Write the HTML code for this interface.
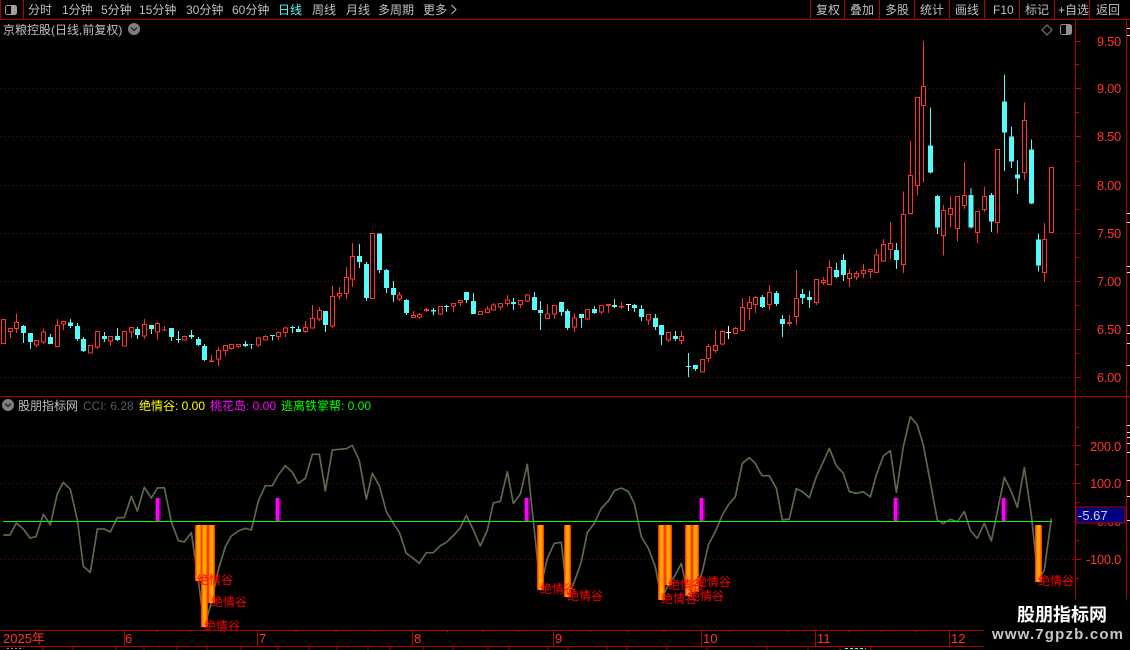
<!DOCTYPE html>
<html lang="zh">
<head>
<meta charset="utf-8">
<title>股朋指标网</title>
<style>
html,body{margin:0;padding:0;background:#000;width:1130px;height:650px;overflow:hidden}
svg{display:block}
text{font-family:"Liberation Sans","WenQuanYi Zen Hei","Noto Sans CJK SC",sans-serif;font-size:12px}
.c path{shape-rendering:crispEdges;fill:none}
.rw{stroke:#ff3232;stroke-width:3}
.rf{stroke:#ff3232;stroke-width:15}
.rb{stroke:#ff3232;stroke-width:3;fill:#000!important}
.cw{stroke:#54fcfc;stroke-width:3}
.cf{stroke:#54fcfc;stroke-width:15}
.ww{stroke:#fff;stroke-width:3}
.wf{stroke:#fff;stroke-width:15}
.cci{fill:none;stroke:#5f6a4c;stroke-width:5;stroke-linejoin:round}
.dim{shape-rendering:crispEdges}
.ax{fill:#ff3232;font-size:13px;text-anchor:end;letter-spacing:-.3px}
.tb{fill:#c0c0c0}
.jq{fill:#ff0000}
.tm{fill:#ff3232;font-size:13px}
</style>
</head>
<body>
<svg width="1130" height="650" viewBox="0 0 1130 650" xmlns="http://www.w3.org/2000/svg">
<defs>
<linearGradient id="o">
<stop offset="0" stop-color="#ff3c00"/><stop offset=".143" stop-color="#ff3c00"/>
<stop offset=".143" stop-color="#ff7800"/><stop offset=".286" stop-color="#ff7800"/>
<stop offset=".286" stop-color="#ffa000"/><stop offset=".714" stop-color="#ffa800"/>
<stop offset=".714" stop-color="#ff7800"/><stop offset=".857" stop-color="#ff7800"/>
<stop offset=".857" stop-color="#ff3c00"/><stop offset="1" stop-color="#ff3c00"/>
</linearGradient>
<linearGradient id="p">
<stop offset="0" stop-color="#600060"/><stop offset=".167" stop-color="#600060"/>
<stop offset=".167" stop-color="#ff00ff"/><stop offset=".667" stop-color="#ff00ff"/>
<stop offset=".667" stop-color="#900090"/><stop offset="1" stop-color="#600060"/>
</linearGradient>
</defs>
<rect width="1130" height="650" fill="#000"/>

<!-- grid -->
<g class="dim" stroke="#7a0000" stroke-dasharray="1 3" fill="none">
<path d="M0 88.5H1075M0 136.5H1075M0 185.5H1075M0 233.5H1075M0 281.5H1075M0 329.5H1075M0 377.5H1075M0 445.5H1075M0 483.5H1075M0 559.5H1075"/>
</g>

<!-- candles part 1 -->
<g class="c" transform="translate(.17,230) scale(.33333)">
<path class="rw" d="M31 294V324M49 250V309M109 331V351M130 295V342M172 267V351M190 271V300M292 304V357M331 318V348M394 292V324M433 267V327M472 276V330M493 288V303M553 316V332M634 375V396M655 351V408M676 345V378M694 342V358M715 342V354M775 321V351M796 316V332M835 304V330M856 291V321M916 273V309M937 225V294M958 231V273M997 168V294M1018 171V210M1039 111V207M1057 39V171"/>
<path class="rb" d="M4 268h12V341h-12zM25 295h12V304h-12zM43 277h12V296h-12zM103 331h12V345h-12zM124 306h12V336h-12zM166 286h12V350h-12zM184 274h12V282h-12zM265 346h12V369h-12zM286 304h12V351h-12zM325 319h12V333h-12zM367 304h12V348h-12zM388 292h12V306h-12zM427 283h12V318h-12zM466 280h12V306h-12zM547 319h12V330h-12zM649 361h12V387h-12zM670 346h12V362h-12zM688 343h12V356h-12zM709 343h12V350h-12zM769 324h12V345h-12zM790 319h12V330h-12zM829 307h12V320h-12zM850 294h12V308h-12zM910 292h12V305h-12zM931 265h12V294h-12zM952 241h12V267h-12zM991 199h12V288h-12zM1012 190h12V198h-12zM1033 142h12V191h-12zM1051 79h12V147h-12zM1111 10h12V206h-12z"/>
<path class="rf" d="M493 298V302M634 391V396"/>
<path class="cw" d="M70 285V339M91 309V357M151 312V342M211 267V294M232 279V333M250 321V366M313 306V336M352 294V333M412 291V327M454 285V312M514 294V333M535 303V339M574 300V327M595 321V348M613 342V393M736 333V351M754 342V357M817 315V331M877 288V309M895 288V306M976 243V306M1078 42V114M1099 96V213M1138 10V129"/>
<path class="cf" d="M70 288V309M91 309V336M151 321V342M211 277V288M232 288V327M250 327V363M313 318V327M352 318V330M412 297V315M454 285V297M514 294V321M535 327V330M574 315V321M595 327V345M613 348V390M736 342V348M754 343V345M817 315V318M877 291V294M895 297V306M976 243V285M1078 78V96M1099 102V204M1138 10V120"/>
</g>

<!-- candles part 2 -->
<g class="c" transform="translate(380.17,230) scale(.33333)">
<path class="rw" d="M58 186V213M100 243V264M118 249V267M139 234V246M181 228V255M220 219V246M241 210V228M322 228V249M340 219V241M361 219V240M382 195V228M421 210V234M442 192V216M502 222V267M523 225V267M583 249V306M622 237V270M664 225V252M685 222V249M724 216V237M805 252V285M865 306V336M904 303V342M985 342V396M1006 300V369M1027 300V345M1066 291V312M1087 204V303M1108 198V270M1126 198V249"/>
<path class="rb" d="M52 195h12V207h-12zM94 256h12V263h-12zM112 253h12V261h-12zM175 229h12V252h-12zM214 220h12V228h-12zM235 211h12V218h-12zM295 244h12V254h-12zM316 237h12V248h-12zM334 225h12V240h-12zM355 220h12V231h-12zM376 210h12V221h-12zM415 211h12V224h-12zM436 195h12V213h-12zM496 252h12V266h-12zM517 226h12V252h-12zM577 264h12V291h-12zM616 238h12V267h-12zM658 226h12V246h-12zM799 253h12V270h-12zM859 307h12V330h-12zM898 319h12V332h-12zM961 388h12V426h-12zM979 349h12V386h-12zM1000 346h12V362h-12zM1021 304h12V342h-12zM1060 295h12V311h-12zM1081 232h12V302h-12zM1102 217h12V236h-12zM1120 202h12V224h-12z"/>
<path class="rf" d="M139 237V243M685 222V228M724 228V233"/>
<path class="cw" d="M19 117V189M40 153V216M79 207V255M160 234V255M199 225V246M259 186V219M280 189V252M400 204V240M463 186V240M481 213V300M544 216V258M562 237V300M604 252V294M643 228V252M703 207V234M763 222V246M784 225V273M826 252V300M844 285V345M886 303V333M925 369V441M946 405V423"/>
<path class="cf" d="M19 120V174M40 174V195M79 210V249M160 240V245M199 228V231M259 186V210M280 213V252M400 216V222M463 201V240M481 240V249M544 216V246M562 243V294M604 252V264M643 237V249M703 225V231M763 225V234M784 237V261M826 264V291M844 285V315M886 318V327M925 408V411M946 405V417"/>
<path class="ww" d="M745 222V243M1045 288V327"/>
<path class="wf" d="M745 222V225M1045 306V309"/>
</g>

<!-- candles part 3 -->
<g class="c" transform="translate(760.17,200) scale(.33333)">
<path class="rw" d="M28 255V330M88 345V378M109 210V375M169 238V315M190 231V255M208 180V255M268 207V261M289 213V240M310 192V234M331 207V234M349 147V219M370 117V186M391 66V177"/>
<path class="rb" d="M22 277h12V314h-12zM103 295h12V349h-12zM163 239h12V307h-12zM184 241h12V247h-12zM202 202h12V254h-12zM262 220h12V236h-12zM283 220h12V231h-12zM304 211h12V220h-12zM325 208h12V215h-12zM343 165h12V218h-12zM364 133h12V183h-12zM385 130h12V149h-12z"/>
<path class="rf" d="M88 366V372"/>
<path class="cw" d="M7 285V324M49 273V318M67 345V411M127 267V312M148 273V324M229 189V234M250 162V243M409 129V207"/>
<path class="cf" d="M7 291V321M49 279V312M67 357V372M127 282V294M148 291V300M229 210V231M250 180V225M409 150V180"/>
</g>

<!-- candles part 4 -->
<g class="c" transform="translate(760.17,30) scale(.33333)">
<path class="rw" d="M430 484V729M451 333V553M472 466V497M490 33V458M550 525V677M571 498V591M592 595V635M613 397V537M652 607V639M673 471V546M712 577V610M793 217V450M853 579V755"/>
<path class="rb" d="M424 553h12V703h-12zM445 436h12V550h-12zM466 202h12V466h-12zM484 170h12V227h-12zM544 541h12V616h-12zM565 535h12V554h-12zM586 499h12V595h-12zM607 496h12V526h-12zM646 544h12V607h-12zM667 499h12V538h-12zM706 358h12V577h-12zM787 271h12V427h-12zM847 628h12V728h-12zM868 412h12V608h-12z"/>
<path class="cw" d="M511 232V430M532 495V612M632 474V596M694 489V606M733 133V423M754 289V414M772 391V492M814 328V522M835 610V725"/>
<path class="cf" d="M511 346V428M532 498V593M632 495V593M694 495V575M733 214V308M754 319V395M772 433V446M814 358V521M835 628V707"/>
</g>

<!-- CCI line -->
<g transform="translate(0,395) scale(.33333)"><polyline class="cci" points="10,420 30,420 49,384 70,402 90,429 108,425 130,358 151,390 172,296 190,262 211,283 232,375 250,514 271,532 292,402 313,402 331,411 352,368 373,368 394,304 412,348 433,277 454,309 472,279 493,278 514,380 535,437 553,441 574,413 595,557 613,695 634,623 655,525 676,455 694,423 715,408 736,400 754,405 775,318 796,272 817,272 835,240 856,212 877,232 895,265 916,250 937,178 958,178 976,288 997,165 1018,163 1039,161 1057,151 1078,197 1099,313 1117,235 1138,272"/></g>
<g transform="translate(380,395) scale(.33333)"><polyline class="cci" points="-2,272 19,350 40,385 58,412 79,475 100,490 118,505 139,473 160,473 181,452 199,442 220,422 241,398 259,361 280,405 301,453 322,405 340,324 361,319 382,230 400,325 421,297 442,208 463,405 481,583 502,490 523,445 544,442 562,605 583,560 604,500 622,412 643,385 664,340 685,318 703,287 724,279 745,290 763,325 784,425 805,460 826,515 844,613 865,570 886,540 904,505 925,603 946,590 967,530 985,450 1006,410 1027,360 1045,330 1066,305 1087,205 1108,188 1126,205 1140,232"/></g>
<g transform="translate(760,395) scale(.33333)"><polyline class="cci" points="0,232 7,242 28,242 49,280 67,375 88,372 109,281 127,290 148,308 169,245 190,200 208,160 229,212 250,235 268,290 289,295 310,290 331,306 349,240 370,183 391,167 409,292 430,155 451,65 472,90 490,150 511,262 532,375 550,386 571,373 592,380 613,350 632,408 652,430 673,385 694,438 712,350 733,247 754,290 772,337 793,218 814,360 835,558 853,525 874,370"/></g>

<!-- zero line -->
<rect class="dim" x="3" y="521" width="1049" height="1" fill="#00ff00"/>

<!-- orange bars -->
<g class="dim" fill="url(#o)">
<rect x="195" y="525" width="7" height="56"/>
<rect x="201" y="525" width="7" height="102"/>
<rect x="208" y="525" width="7" height="78"/>
<rect x="537" y="525" width="7" height="65"/>
<rect x="564" y="525" width="7" height="72"/>
<rect x="658" y="525" width="7" height="75"/>
<rect x="665" y="525" width="7" height="60"/>
<rect x="685" y="525" width="7" height="71"/>
<rect x="692" y="525" width="7" height="67"/>
<rect x="1035" y="525" width="7" height="57"/>
</g>
<!-- magenta bars -->
<g class="dim" fill="url(#p)">
<rect x="155" y="498" width="6" height="23"/>
<rect x="275" y="498" width="6" height="23"/>
<rect x="524" y="498" width="6" height="23"/>
<rect x="699" y="498" width="6" height="23"/>
<rect x="893" y="498" width="6" height="23"/>
<rect x="1001" y="498" width="6" height="23"/>
</g>

<!-- labels 绝情谷 -->
<text class="jq" x="197" y="584">绝情谷</text>
<text class="jq" x="211" y="606">绝情谷</text>
<text class="jq" x="204" y="630">绝情谷</text>
<text class="jq" x="540" y="593">绝情谷</text>
<text class="jq" x="567" y="600">绝情谷</text>
<text class="jq" x="661" y="603">绝情谷</text>
<text class="jq" x="668" y="589">绝情谷</text>
<text class="jq" x="688" y="600">绝情谷</text>
<text class="jq" x="695" y="586">绝情谷</text>
<text class="jq" x="1038" y="585">绝情谷</text>

<!-- frame -->
<g class="dim" fill="#b00000">
<rect x="0" y="19" width="1130" height="1"/>
<rect x="0" y="0" width="1" height="19"/>
<rect x="23" y="0" width="1" height="19"/>
<rect x="810" y="0" width="1" height="19"/>
<rect x="844" y="0" width="1" height="19"/>
<rect x="879" y="0" width="1" height="19"/>
<rect x="914" y="0" width="1" height="19"/>
<rect x="949" y="0" width="1" height="19"/>
<rect x="984" y="0" width="1" height="19"/>
<rect x="1019" y="0" width="1" height="19"/>
<rect x="1054" y="0" width="1" height="19"/>
<rect x="1089" y="0" width="1" height="19"/>
<rect x="0" y="396" width="1130" height="1"/>
<rect x="1075" y="20" width="1" height="580"/>
<rect x="1126" y="20" width="1" height="580"/>
<rect x="0" y="630" width="984" height="1"/>
<rect x="0" y="646" width="984" height="1"/>
<rect x="124" y="630" width="1" height="16"/>
<rect x="257" y="630" width="1" height="16"/>
<rect x="412" y="630" width="1" height="16"/>
<rect x="553" y="630" width="1" height="16"/>
<rect x="701" y="630" width="1" height="16"/>
<rect x="815" y="630" width="1" height="16"/>
<rect x="949" y="630" width="1" height="16"/>
</g>
<!-- axis ticks -->
<path class="dim" fill="none" stroke="#d00000" d="M1076 41.5h5M1076 88.5h5M1076 136.5h5M1076 185.5h5M1076 233.5h5M1076 281.5h5M1076 329.5h5M1076 377.5h5M1076 64.5h3M1076 112.5h3M1076 161.5h3M1076 209.5h3M1076 257.5h3M1076 305.5h3M1076 353.5h3M1076 445.5h5M1076 483.5h5M1076 559.5h5M1076 427.5h3M1076 464.5h3M1076 502.5h3M1076 540.5h3M1076 578.5h3M1073 445.5h1M1073 483.5h1M1073 559.5h1M1073 521.5h1"/>
<path class="dim" fill="none" stroke="#d00000" d="M157 630.5v2M190.5 630.5v2M224 630.5v2M296 630.5v2M336 630.5v2M374 630.5v2M447.5 630.5v2M483 630.5v2M518 630.5v2M590 630.5v2M627.5 630.5v2M664 630.5v2M730 630.5v2M787.5 630.5v2M849 630.5v2M882 630.5v2M916.5 630.5v2"/>
<path class="dim" fill="none" stroke="#b00000" d="M43 647v3M73 647v3M116 647v3M144 647v3M177 647v3M207 647v3M241 647v3M278 647v3M309 647v3M337 647v3M368 647v3M390 647v3M423 647v3M453 647v3M488 647v3M509 647v3M548 647v3M568 647v3M607 647v3M627 647v3M667 647v3M707 647v3M767 647v3M808 647v3M840 647v3M871 647v3"/>
<path class="dim" fill="none" stroke="#e0e0e0" d="M1127 28.5h3M1127 35.5h3M1127 425.5h3M1127 432.5h3M1127 437.5h3M1127 443.5h3M1127 452.5h3M1127 480.5h3M1127 496.5h3M1127 520.5h3M1127 325.5h3M1127 333.5h3M1127 343.5h3M1127 365.5h3M1127 213.5h3M1127 222.5h3M1127 266.5h3M1127 272.5h3"/>
<path class="dim" fill="none" stroke="#909090" stroke-dasharray="2 2" d="M7 648.5h14"/>
<path class="dim" fill="none" stroke="#54fcfc" stroke-dasharray="3 2" d="M845 648.5h21"/>

<!-- top left icon -->
<rect x="5.5" y="5.5" width="11" height="9" rx="2" fill="none" stroke="#a0a0a0"/>
<rect x="11" y="6" width="5" height="8" fill="#a0a0a0"/>

<!-- top bar -->
<text class="tb" x="28" y="14">分时</text>
<text class="tb" x="62" y="14">1分钟</text>
<text class="tb" x="101" y="14">5分钟</text>
<text class="tb" x="139" y="14">15分钟</text>
<text class="tb" x="186" y="14">30分钟</text>
<text class="tb" x="232" y="14">60分钟</text>
<text x="278" y="14" fill="#54fcfc">日线</text>
<text class="tb" x="312" y="14">周线</text>
<text class="tb" x="346" y="14">月线</text>
<text class="tb" x="378" y="14">多周期</text>
<text class="tb" x="423" y="14">更多</text>
<path d="M451.5 5l4.5 4.5-4.5 4.5" fill="none" stroke="#c0c0c0"/>
<text class="tb" x="816" y="14">复权</text>
<text class="tb" x="850" y="14">叠加</text>
<text class="tb" x="885" y="14">多股</text>
<text class="tb" x="920" y="14">统计</text>
<text class="tb" x="955" y="14">画线</text>
<text class="tb" x="993" y="14">F10</text>
<text class="tb" x="1025" y="14">标记</text>
<text class="tb" x="1058" y="14">+自选</text>
<text class="tb" x="1096" y="14">返回</text>

<!-- title -->
<text class="tb" x="3" y="34">京粮控股(日线,前复权)</text>
<circle cx="134" cy="29" r="6" fill="#808080"/>
<path d="M131 27.5l3 3 3-3" fill="none" stroke="#222" stroke-width="1.3"/>
<path d="M1047 25l5 5-5 5-5-5z" fill="none" stroke="#808080"/>
<rect x="1060.5" y="24.5" width="11" height="10" rx="2" fill="none" stroke="#909090"/>
<rect x="1066" y="25" width="5" height="9" fill="#909090"/>

<!-- price axis -->
<text class="ax" x="1121" y="46">9.50</text>
<text class="ax" x="1121" y="93">9.00</text>
<text class="ax" x="1121" y="141">8.50</text>
<text class="ax" x="1121" y="190">8.00</text>
<text class="ax" x="1121" y="238">7.50</text>
<text class="ax" x="1121" y="286">7.00</text>
<text class="ax" x="1121" y="334">6.50</text>
<text class="ax" x="1121" y="382">6.00</text>

<!-- indicator title -->
<circle cx="8" cy="405" r="6" fill="#808080"/>
<path d="M5 403.5l3 3 3-3" fill="none" stroke="#222" stroke-width="1.3"/>
<text class="tb" x="18" y="410">股朋指标网</text>
<text x="83" y="410" fill="#5a5a5a">CCI: 6.28</text>
<text x="139" y="410" fill="#ffff00">绝情谷: 0.00</text>
<text x="210" y="410" fill="#ff00ff">桃花岛: 0.00</text>
<text x="281" y="410" fill="#00ff00">逃离铁掌帮: 0.00</text>

<!-- indicator axis -->
<text class="ax" x="1121" y="451">200.0</text>
<text class="ax" x="1121" y="488">100.0</text>
<text class="ax" x="1121" y="526">0.00</text>
<text class="ax" x="1121" y="564">-100.0</text>
<rect class="dim" x="1076" y="507" width="49" height="16" fill="#000080" stroke="#b00000"/>
<text x="1078" y="520" style="font-size:13px" fill="#c8d8ff">-5.67</text>

<!-- time axis -->
<text class="tm" x="3" y="643">2025年</text>
<text class="tm" x="125" y="643">6</text>
<text class="tm" x="259" y="643">7</text>
<text class="tm" x="414" y="643">8</text>
<text class="tm" x="555" y="643">9</text>
<text class="tm" x="703" y="643">10</text>
<text class="tm" x="817" y="643">11</text>
<text class="tm" x="951" y="643">12</text>

<!-- watermark -->
<rect x="984" y="600" width="146" height="50" fill="#000"/>
<text x="1017" y="621" fill="#fff" font-weight="bold" style="font-size:18px">股朋指标网</text>
<text x="992" y="639" fill="#c8c8c8" font-weight="bold" textLength="131" lengthAdjust="spacing" style="font-size:15px">www.7gpzb.com</text>
</svg>
</body>
</html>
